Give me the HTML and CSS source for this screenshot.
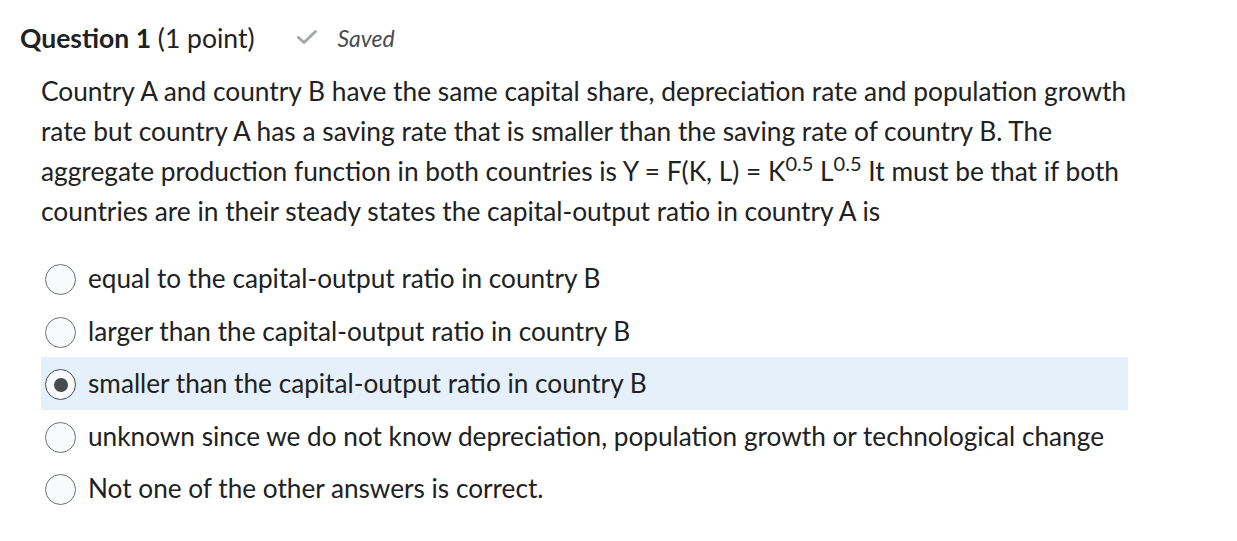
FILE: index.html
```html
<!DOCTYPE html>
<html>
<head>
<meta charset="utf-8">
<link rel="stylesheet" href="styles.css">
</head>
<body>
<div class="question">
  <div class="q-header">
    <h2 class="q-title"><strong>Question 1</strong> (1 point)</h2>
    <span class="saved">
      <svg class="check" width="22" height="16" viewBox="0 0 22 16"><path d="M2.5 8.5 L8 13.5 L19.5 2.5" fill="none" stroke="#a3a8ad" stroke-width="3" stroke-linecap="round" stroke-linejoin="round"/></svg>
      <em>Saved</em>
    </span>
  </div>
  <div class="q-body">
    <p class="q-text">Country A and country B have the same capital share, depreciation rate and population growth rate but country A has a saving rate that is smaller than the saving rate of country B. The aggregate production function in both countries is Y = F(K, L) = K<sup>0.5</sup> L<sup>0.5</sup> It must be that if both countries are in their steady states the capital-output ratio in country A is</p>
    <div class="options">
      <label class="option"><span class="radio"></span><span class="opt-text">equal to the capital-output ratio in country B</span></label>
      <label class="option"><span class="radio"></span><span class="opt-text">larger than the capital-output ratio in country B</span></label>
      <label class="option selected"><span class="radio checked"></span><span class="opt-text">smaller than the capital-output ratio in country B</span></label>
      <label class="option"><span class="radio"></span><span class="opt-text">unknown since we do not know depreciation, population growth or technological change</span></label>
      <label class="option"><span class="radio"></span><span class="opt-text">Not one of the other answers is correct.</span></label>
    </div>
  </div>
</div>
</body>
</html>
```
FILE: styles.css
```css
* { box-sizing: border-box; }
html, body { margin: 0; padding: 0; background: #ffffff; }
body {
  font-family: Lato, "Open Sans", sans-serif;
  color: #202122;
}
.question {
  padding: 20px 0 0 20px;
  width: 1150px;
}
.q-header {
  display: flex;
  align-items: center;
  height: 36px;
}
.q-title {
  margin: 0;
  font-size: 26.5px;
  font-weight: 400;
  line-height: 36px;
}
.q-title strong { font-weight: 700; }
.saved {
  display: flex;
  align-items: center;
  margin-left: 42px;
  color: #494c4e;
  font-size: 23px;
}
.check { margin-right: 19px; margin-top: -2px; }
.saved em { font-style: italic; }
.q-body {
  padding-left: 21px;
}
.q-text {
  margin: 15px 0 0 0;
  font-size: 26.3px;
  line-height: 40px;
  width: 1100px;
}
.q-text sup {
  font-size: 20px;
  line-height: 0;
  vertical-align: 10px;
}
.options {
  margin-top: 21px;
  display: flex;
  flex-direction: column;
  width: 1087px;
}
.option {
  display: flex;
  align-items: center;
  height: 52.5px;
  padding-left: 4px;
  font-size: 26.2px;
}
.option.selected { background: #e6f0fa; }
.radio {
  width: 31px;
  height: 31px;
  border-radius: 50%;
  border: 1.5px solid #6e7276;
  background: #f9fafc;
  margin-right: 12px;
  flex: none;
  display: flex;
  align-items: center;
  justify-content: center;
  margin-top: 3px;
}
.radio.checked { border-color: #494c4e; }
.radio.checked::after {
  content: "";
  width: 14px;
  height: 14px;
  border-radius: 50%;
  background: #494c4e;
}
.opt-text { line-height: 30px; }
```
